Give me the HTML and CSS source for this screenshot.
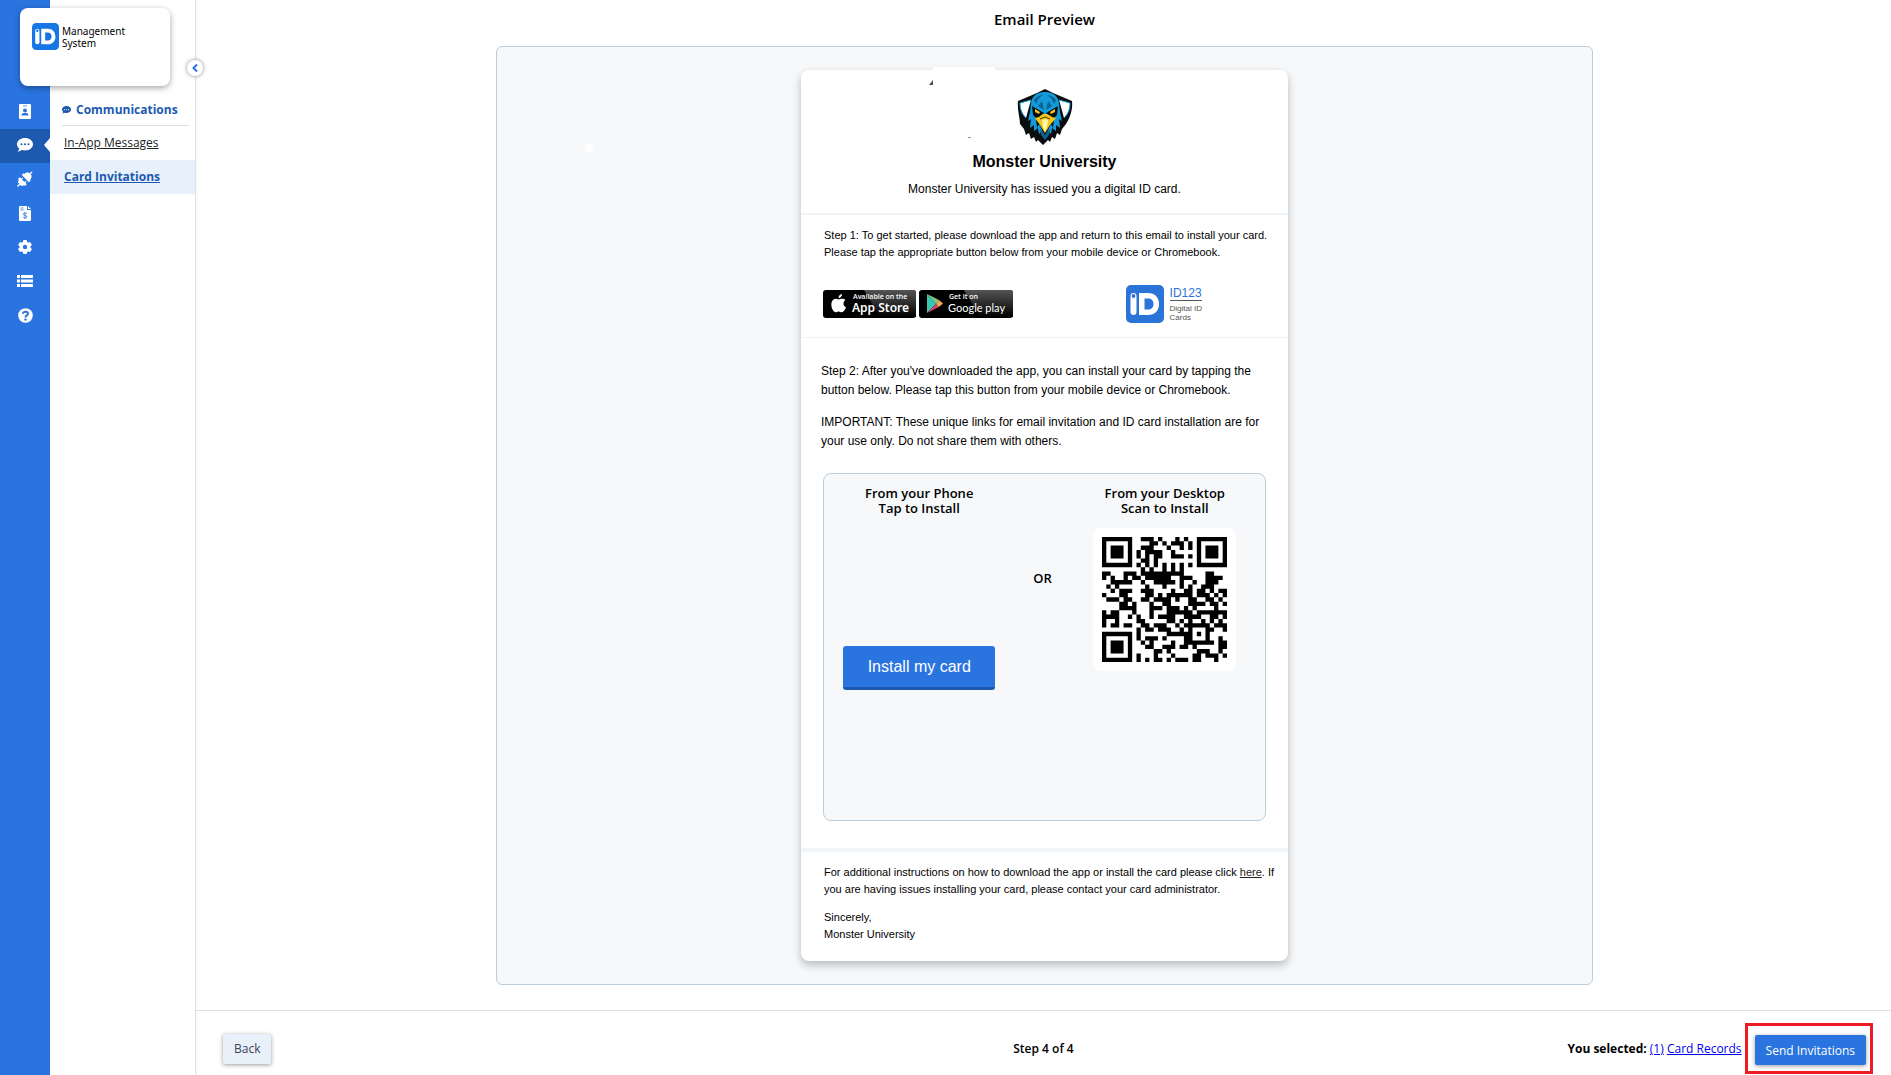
FILE: index.html
```html
<!DOCTYPE html>
<html lang="en">
<head>
    <meta charset="UTF-8">
    <meta name="viewport" content="width=device-width, initial-scale=1.0">
    <title>ID Management System - Card Invitations</title>
    <link rel="stylesheet" href="styles.css">
</head>
<body>
    <div class="app">
        <nav class="rail" aria-label="Main">
            <a href="#" aria-label="Card records">
                <svg width="12" height="15" viewBox="0 0 12 15"><path fill="#fff" fill-rule="evenodd" d="M1 0h10a1 1 0 0 1 1 1v13a1 1 0 0 1-1 1H1a1 1 0 0 1-1-1V1a1 1 0 0 1 1-1zM4 1.400h4v.8H4zM6 4.500a2 2 0 1 0 0 4 2 2 0 0 0 0-4zM2.500 11.500h7c0-1.700-1-2.500-2.300-2.500H4.800c-1.300 0-2.300.8-2.300 2.500z"/></svg>
            </a>
            <a href="#" class="active" aria-label="Communications">
                <svg width="16" height="14" viewBox="0 0 16 14"><path fill="#fff" d="M8 0c4.400 0 8 2.700 8 6.200s-3.600 6.200-8 6.200c-1.100 0-2.200-.2-3.200-.5C3.700 12.700 2.200 13.500.6 13.500c1-.9 1.500-2 1.600-3C.8 9.400 0 7.900 0 6.200 0 2.700 3.600 0 8 0z"/><g fill="#1c5ab0"><circle cx="4.500" cy="6.300" r="1"/><circle cx="8" cy="6.300" r="1"/><circle cx="11.500" cy="6.300" r="1"/></g></svg>
            </a>
            <a href="#" aria-label="Integrations">
                <svg width="18" height="18" viewBox="0 0 18 18"><g transform="rotate(-45 9 9)" fill="#fff"><path d="M-1.500 8.300h3v1.400h-3zM1.500 6.500l1.500-1h1V4h2.500v10H4v-1.500H3l-1.500-1zM6.500 6h1.700v1.200H6.500zM6.500 10.800h1.700V12H6.500zM9.500 4H12v1h1.500l2.500 1.500v1.800h3v1.400h-3v1.800L13.500 13H12v1H9.500z"/></g></svg>
            </a>
            <a href="#" aria-label="Billing">
                <svg width="12" height="15" viewBox="0 0 12 15"><path fill="#fff" d="M1 0h7v4h4v10a1 1 0 0 1-1 1H1a1 1 0 0 1-1-1V1a1 1 0 0 1 1-1zM9 0l3 3H9z"/><path fill="none" stroke="#2a74e0" stroke-width=".8" d="M1.500 2h3M1.500 4h3M7.800 7.500c-.8-.8-3.500-.9-3.500.7 0 1.800 3.600.9 3.600 2.600 0 1.500-2.800 1.500-3.700.6M6 6v7"/></svg>
            </a>
            <a href="#" aria-label="Settings">
                <svg width="16" height="16" viewBox="0 0 16 16"><g fill="#fff"><circle cx="8" cy="8" r="5.500"/><rect x="6" y="1" width="4" height="14" rx="1"/><rect x="6" y="1" width="4" height="14" rx="1" transform="rotate(60 8 8)"/><rect x="6" y="1" width="4" height="14" rx="1" transform="rotate(120 8 8)"/></g><circle cx="8" cy="8" r="2.200" fill="#2a74e0"/></svg>
            </a>
            <a href="#" aria-label="Lists">
                <svg width="16" height="12" viewBox="0 0 16 12"><path fill="#fff" d="M0 0h3v3H0zM4 0h12v3H4zM0 4.500h3v3H0zM4 4.500h12v3H4zM0 9h3v3H0zM4 9h12v3H4z"/></svg>
            </a>
            <a href="#" aria-label="Help">
                <svg width="15" height="15" viewBox="0 0 15 15"><circle cx="7.500" cy="7.500" r="7.300" fill="#fff"/><path fill="none" stroke="#2a74e0" stroke-width="2" d="M5 5.800c0-2.700 5-2.600 5 0C10 7.500 7.500 7.400 7.500 9.400"/><circle cx="7.500" cy="11.600" r="1.200" fill="#2a74e0"/></svg>
            </a>
        </nav>

        <aside class="submenu">
            <h2 class="submenu-title">
                <svg width="9" height="8" viewBox="0 0 16 14"><path fill="#1c5ab0" d="M8 0c4.400 0 8 2.700 8 6.200s-3.600 6.200-8 6.200c-1.100 0-2.200-.2-3.200-.5C3.700 12.700 2.200 13.500.6 13.500c1-.9 1.500-2 1.600-3C.8 9.400 0 7.900 0 6.200 0 2.700 3.600 0 8 0z"/><path stroke="#fff" stroke-width="1.500" stroke-dasharray="2 1.500" d="M3.500 6.500h9"/></svg>
                Communications
            </h2>
            <a href="#" class="submenu-link">In-App Messages</a>
            <a href="#" class="submenu-link current">Card Invitations</a>
            <button class="collapse" type="button" aria-label="Collapse menu">
                <svg width="6" height="8" viewBox="0 0 6 8"><path fill="none" stroke="#2a74e0" stroke-width="2" d="M5 .5L1.500 4 5 7.500"/></svg>
            </button>
        </aside>

        <div class="brand">
            <svg width="27" height="27" viewBox="0 0 38 38"><rect width="38" height="38" rx="6" fill="#1676e3"/><rect x="4.500" y="8" width="6" height="22" rx="3" fill="#fff"/><circle cx="7.500" cy="11" r="1.700" fill="#1676e3"/><path fill="#fff" fill-rule="evenodd" d="M13 8h9c7 0 11 4.500 11 11s-4 11-11 11h-9zM18.500 13.500v11H22c3.500 0 5.500-2 5.500-5.500s-2-5.500-5.500-5.500z"/></svg>
            <span class="brand-name">Management<br>System</span>
        </div>

        <div class="page">
            <main class="main">
                <h1 class="page-title">Email Preview</h1>
                <section class="preview">
                    <article class="email">
                        <header class="email-head">
                            <svg class="specks" width="70" height="80" viewBox="0 0 70 80"><path fill="#fff" d="M4 0h62v20H4z"/><path fill="#4b4d52" d="M4 13v5H0z"/><path fill="#999" d="M39 70h3v1h-3z"/></svg>
                            <svg class="crest" width="56" height="56" viewBox="0 0 56 56">
                                <path fill="#0a0d10" d="M28 0l8 4 19 8c1 8-2 17-6 23l-4 5-2 6-3-2-2 6-3-2-2 5-2-2-5 5-5-5-2 2-2-5-3 2-2-6-3 2-2-6-4-5C3 29 0 20 1 12l19-8z"/>
                                <path fill="#fff" d="M3 14l11-3-2 7-3 11C5 25 3 20 3 14zM53 14l-11-3 2 7 3 11c4-4 6-9 6-15z"/>
                                <path fill="none" stroke="#119bd8" d="M14 11L3 14c0 7 2 11 6 15M42 11l11 3c0 7-2 11-6 15"/>
                                <path fill="#119bdb" d="M28 3c-9 0-14 5-14 12l-1 8-2 9 3-2-1 9 4-3v6l4-3 1 6 3-3 3 8 3-8 3 3 1-6 4 3v-6l4 3-1-9 3 2-2-9-1-8C42 8 37 3 28 3z"/>
                                <path fill="#0e608d" d="M17 11c3-4 7-5 9-5-5 3-6 6-7 9zM39 11c-3-4-7-5-9-5 5 3 6 6 7 9zM25 12l2 9-6-4zM31 12l-2 9 6-4zM23 40l5 4 5-4-1 6-4 5-4-5z"/>
                                <path fill="#0a0d10" d="M15 17l12 7-4 4 1 9 4 6 4-6 1-9-4-4 12-7-1 9-3 3-1 10-2-4-3 6-3 5-3-5-3-6-2 4-1-10-3-3z"/>
                                <path fill="#f6c619" d="M18 20l5 3-1 2-4-2zM38 20l-5 3 1 2 4-2zM28 25c4 0 5 2 7 3l4 1-6 7-5 8-5-8-5-7 4-1c2-1 2-3 6-3z"/>
                                <path fill="#fff7a8" d="M28 30l3 1-1 7-2 5-2-5-1-7z"/>
                                <path fill="none" stroke="#473914" d="M23 30l5-2 5 2"/>
                            </svg>
                            <h2 class="org-name">Monster University</h2>
                            <p class="org-note">Monster University has issued you a digital ID card.</p>
                        </header>

                        <section class="step-one">
                            <p>Step 1: To get started, please download the app and return to this email to install your card. Please tap the appropriate button below from your mobile device or Chromebook.</p>
                            <div class="stores">
                                <a href="#" class="store" aria-label="Available on the App Store">
                                    <svg width="93" height="28" viewBox="0 0 93 28">
                                        <defs><linearGradient id="gloss" x1="0" y1="0" x2="0" y2="1"><stop offset="0" stop-color="#555"/><stop offset="1" stop-color="#000"/></linearGradient></defs>
                                        <rect width="93" height="28" rx="3" fill="#000"/><path fill="url(#gloss)" d="M41 0h49a3 3 0 0 1 3 3v24H57z"/>
                                        <path fill="#fff" d="M19 4c.2 2-1.500 4-3.400 4C15.400 6 17 4.300 19 4zM22.500 10c-3 2-2.500 6 .5 7.200-.8 2.300-2.400 5-4.100 5-1.300 0-1.700-.8-3.200-.8s-2 .8-3.200.8C9.500 22.200 6 13 10.500 9.500c2-1.400 3.800-.1 5.100-.1 1.300 0 4.500-2 6.900.6z"/>
                                        <text x="30" y="9" class="badge-small">Available on the</text><text x="29" y="22" class="badge-large">App Store</text>
                                    </svg>
                                </a>
                                <a href="#" class="store" aria-label="Get it on Google play">
                                    <svg width="94" height="28" viewBox="0 0 94 28">
                                        <rect width="94" height="28" rx="3" fill="#000"/><path fill="url(#gloss)" d="M45 0h46a3 3 0 0 1 3 3v24H61z"/>
                                        <path fill="#35c7b2" d="M8 4v19l9-9z"/><path fill="#7bc883" d="M8 4l12 6-3 4z"/><path fill="#d63f62" d="M8 23l12-6-3-3z"/><path fill="#f5a957" d="M20 10l4 3.500-4 3.500-3-3z"/>
                                        <text x="30" y="9" class="badge-small">Get it on</text><text x="29" y="22" class="badge-google">Google play</text>
                                    </svg>
                                </a>
                                <div class="id-logo">
                                    <svg width="38" height="38" viewBox="0 0 38 38"><rect width="38" height="38" rx="5" fill="#2a74d8"/><rect x="4.500" y="8" width="6" height="22" rx="3" fill="#fff"/><circle cx="7.500" cy="11" r="1.900" fill="#2a74d8"/><path fill="#fff" fill-rule="evenodd" d="M13 8h9c7 0 11 4.500 11 11s-4 11-11 11h-9zM18.500 13.500v11H22c3.500 0 5.500-2 5.500-5.500s-2-5.500-5.500-5.500z"/></svg>
                                    <div class="id-text"><strong>ID123</strong><span>Digital ID<br>Cards</span></div>
                                </div>
                            </div>
                        </section>

                        <section class="step-two">
                            <p>Step 2: After you've downloaded the app, you can install your card by tapping the button below. Please tap this button from your mobile device or Chromebook.</p>
                            <p>IMPORTANT: These unique links for email invitation and ID card installation are for your use only. Do not share them with others.</p>
                            <div class="install-box">
                                <div class="install-phone">
                                    <h3>From your Phone<br>Tap to Install</h3>
                                    <button class="install-btn" type="button">Install my card</button>
                                </div>
                                <div class="install-or">OR</div>
                                <div class="install-desktop">
                                    <h3>From your Desktop<br>Scan to Install</h3>
                                    <div class="qr-tile"><svg id="qr" width="125" height="125" viewBox="0 0 29 29" role="img" aria-label="QR code"><path/></svg></div>
                                </div>
                            </div>
                        </section>

                        <footer class="email-foot">
                            <p>For additional instructions on how to download the app or install the card please click <a href="#">here</a>. If you are having issues installing your card, please contact your card administrator.</p>
                            <p>Sincerely,<br>Monster University</p>
                        </footer>
                    </article>
                </section>
            </main>

            <footer class="actions">
                <button class="btn btn-back" type="button">Back</button>
                <span class="step-count">Step 4 of 4</span>
                <div class="send">
                    <span class="selected"><b>You selected:</b> <a href="#">(1)</a> <a href="#">Card Records</a></span>
                    <div class="highlight"><button class="btn btn-send" type="button">Send Invitations</button></div>
                </div>
            </footer>
        </div>
    </div>
    <script src="qr.js"></script>
</body>
</html>
```

FILE: styles.css
```css
* {
    box-sizing: border-box;
}

body {
    margin: 0;
    font-family: 'Open Sans', 'Noto Sans', sans-serif;
    font-size: 12px;
    color: #000;
    background: #fff;
}

h1, h2, h3, p {
    margin: 0;
}

svg {
    display: block;
    flex-shrink: 0;
}

button {
    font-family: inherit;
    cursor: pointer;
}

.app {
    display: flex;
    min-height: 100vh;
    position: relative;
}

/* Icon rail */
.rail {
    width: 50px;
    padding-top: 95px;
    background: #2a74e0;
    flex-shrink: 0;
}

.rail a {
    display: flex;
    align-items: center;
    justify-content: center;
    height: 34px;
    padding-bottom: 2px;
    position: relative;
}

.rail a.active {
    background: #1c5ab0;
}

.rail a.active::after {
    content: "";
    position: absolute;
    right: 0;
    top: 9px;
    border: 7px solid transparent;
    border-left-width: 0;
    border-right: 6px solid #fff;
}

/* Logo card laid over the rail and submenu */
.brand {
    position: absolute;
    left: 20px;
    top: 8px;
    width: 150px;
    height: 78px;
    padding: 15px 12px;
    display: flex;
    gap: 3px;
    background: #fff;
    border-radius: 8px;
    box-shadow: 0 2px 6px rgba(0, 0, 0, 0.35);
}

.brand-name {
    font-family: 'Noto Sans', sans-serif;
    font-size: 10px;
    line-height: 12px;
    padding-top: 2px;
}

/* Submenu */
.submenu {
    width: 146px;
    padding-top: 94px;
    border-right: 1px solid #e0e2e5;
    box-shadow: 1px 0 3px rgba(0, 0, 0, 0.04);
    position: relative;
    flex-shrink: 0;
}

.submenu-title {
    display: flex;
    align-items: center;
    gap: 5px;
    height: 32px;
    margin: 0 6px 0 12px;
    font-size: 12px;
    color: #1c5ab0;
    border-bottom: 1px solid #dcdfe2;
}

.submenu-link {
    display: block;
    padding-left: 14px;
    line-height: 34px;
    color: #222;
}

.submenu-link.current {
    font-weight: 700;
    color: #1c5ab0;
    background: #e8f0fb;
}

.collapse {
    position: absolute;
    right: -8px;
    top: 60px;
    width: 16px;
    height: 16px;
    padding: 0;
    display: flex;
    align-items: center;
    justify-content: center;
    border: 0;
    border-radius: 50%;
    background: #fff;
    box-shadow: 0 0 4px rgba(0, 0, 0, 0.45);
}

/* Page */
.page {
    flex: 1;
    display: flex;
    flex-direction: column;
    min-width: 0;
}

.main {
    flex: 1;
    display: flex;
    flex-direction: column;
    align-items: center;
    padding: 7px 23px 25px 25px;
}

.page-title {
    font-size: 15px;
    font-weight: 600;
    line-height: 24px;
    margin-bottom: 15px;
}

.preview {
    width: 100%;
    max-width: 1097px;
    padding: 23px 0;
    display: flex;
    justify-content: center;
    background: radial-gradient(circle at 92px 101px, #fff 4px, transparent 5px) #f6f8fa;
    border: 1px solid #bccddb;
    border-radius: 6px;
}

/* Email */
.email {
    width: 487px;
    font-family: 'Liberation Sans', Arial, sans-serif;
    font-size: 11px;
    line-height: 17px;
    background: #fff;
    border-radius: 8px;
    box-shadow: 0 4px 8px rgba(0, 0, 0, 0.25);
}

.email-head {
    position: relative;
    padding: 19px 20px 15px;
    text-align: center;
    border-bottom: 2px solid #eff4f8;
}

.specks {
    position: absolute;
    left: 128px;
    top: -3px;
}

.crest {
    position: relative;
    margin: 0 auto 7px;
}

.org-name {
    font-size: 16px;
    line-height: 20px;
    margin-bottom: 8px;
}

.org-note {
    font-size: 12px;
    line-height: 18px;
}

.step-one {
    padding: 12px 10px 14px 23px;
    border-bottom: 1px solid #f0f2f4;
}

.stores {
    display: flex;
    align-items: center;
    gap: 3px;
    margin: 24px 0 0 -1px;
}

.badge-small {
    font: 600 7px 'Open Sans', sans-serif;
    fill: #fff;
}

.badge-large {
    font: 600 12px 'Noto Sans', sans-serif;
    fill: #fff;
}

.badge-google {
    font: 11px 'Lato', sans-serif;
    fill: #fff;
}

.id-logo {
    display: flex;
    gap: 6px;
    margin: 0 76px 0 auto;
}

.id-text {
    padding-top: 1px;
    font-size: 8px;
    line-height: 9px;
    color: #555;
}

.id-text strong {
    display: block;
    font-size: 12px;
    font-weight: 400;
    line-height: 14px;
    color: #2a74d8;
    border-bottom: 1px solid #555;
    margin-bottom: 3px;
}

.id-text span {
    display: block;
}

.step-two {
    padding: 24px 20px 27px;
    border-bottom: 4px solid #f1f5f8;
}

.step-two p {
    font-size: 12px;
    line-height: 19px;
    margin-bottom: 13px;
}

.install-box {
    display: grid;
    grid-template-columns: 190fr 56fr 188fr;
    min-height: 348px;
    margin: 22px 2px 0;
    padding: 12px 6px 12px 0;
    font-family: 'Open Sans', 'Noto Sans', sans-serif;
    text-align: center;
    background: #f6f8fa;
    border: 1px solid #bccddb;
    border-radius: 8px;
}

.install-box h3,
.install-or {
    font-size: 13px;
    font-weight: 600;
    line-height: 15px;
}

.install-phone,
.install-desktop {
    display: flex;
    flex-direction: column;
    align-items: center;
}

.install-phone {
    gap: 130px;
}

.install-desktop {
    gap: 12px;
}

.install-or {
    padding-top: 85px;
}

.install-btn {
    width: 152px;
    height: 44px;
    padding: 0;
    font-family: 'Liberation Sans', Arial, sans-serif;
    font-size: 16px;
    color: #fff;
    background: #2a74e0;
    border: 0;
    border-bottom: 3px solid #1c5ab0;
    border-radius: 3px;
}

.qr-tile {
    padding: 9px;
    background: #fff;
    border-radius: 8px;
}

.email-foot {
    padding: 12px 10px 18px 23px;
}

.email-foot p + p {
    margin-top: 11px;
}

.email-foot a {
    color: #222;
}

/* Bottom bar */
.actions {
    display: grid;
    grid-template-columns: 1fr auto 1fr;
    align-items: center;
    padding: 12px 18px 2px;
    border-top: 1px solid #dcdfe5;
}

.btn {
    height: 30px;
    padding: 0 11px;
    font-size: 12px;
    border: 0;
    border-radius: 2px;
    box-shadow: 0 1px 4px rgba(0, 0, 0, 0.4);
}

.btn-back {
    justify-self: start;
    margin-left: 9px;
    color: #3b4358;
    background: #e8f0fa;
}

.btn-send {
    display: block;
    color: #fff;
    background: #2a74e0;
}

.step-count {
    font-weight: 600;
}

.send {
    display: flex;
    align-items: center;
    justify-content: flex-end;
    gap: 3px;
}

.selected a {
    color: #00e;
}

.highlight {
    padding: 9px 4px 6px 7px;
    border: 3px solid #ed1c24;
}
```

FILE: qr.js
```js
// QR code, version 3, level L, mask 5
const SIZE = 29;
const DATA_WORDS = 55;
const EC_WORDS = 15;
const FORMAT = '110001100011000';

function gfMul(a, b) {
    let r = 0;
    for (let i = 7; i >= 0; i--) {
        r = (r << 1) ^ ((r >> 7) * 0x11d);
        if ((b >> i) & 1) r ^= a;
    }
    return r;
}

function codewords(text) {
    let bits = '0100' + text.length.toString(2).padStart(8, '0');
    for (const ch of text) bits += ch.charCodeAt(0).toString(2).padStart(8, '0');
    bits += '0000';
    const words = bits.match(/.{8}/g).map(b => parseInt(b, 2));
    for (let pad = 0xec; words.length < DATA_WORDS; pad ^= 0xec ^ 0x11) words.push(pad);

    // Reed-Solomon divisor and remainder
    const div = new Array(EC_WORDS).fill(0);
    div[EC_WORDS - 1] = 1;
    let root = 1;
    for (let i = 0; i < EC_WORDS; i++) {
        for (let j = 0; j < EC_WORDS; j++) {
            div[j] = gfMul(div[j], root);
            if (j + 1 < EC_WORDS) div[j] ^= div[j + 1];
        }
        root = gfMul(root, 2);
    }
    const rem = new Array(EC_WORDS).fill(0);
    for (const w of words) {
        const f = w ^ rem.shift();
        rem.push(0);
        div.forEach((d, i) => { rem[i] ^= gfMul(d, f); });
    }
    return words.concat(rem);
}

function drawQr(text) {
    const grid = Array.from({ length: SIZE }, () => new Array(SIZE).fill(null));
    const set = (r, c, v) => {
        if (r >= 0 && c >= 0 && r < SIZE && c < SIZE) grid[r][c] = Number(v);
    };

    for (let i = 0; i < SIZE; i++) {
        set(6, i, i % 2 === 0);
        set(i, 6, i % 2 === 0);
    }
    for (const [r, c] of [[3, 3], [3, SIZE - 4], [SIZE - 4, 3]]) {
        for (let y = -4; y <= 4; y++) {
            for (let x = -4; x <= 4; x++) {
                const d = Math.max(Math.abs(x), Math.abs(y));
                set(r + y, c + x, d !== 2 && d !== 4);
            }
        }
    }
    for (let y = -2; y <= 2; y++) {
        for (let x = -2; x <= 2; x++) {
            set(22 + y, 22 + x, Math.max(Math.abs(x), Math.abs(y)) !== 1);
        }
    }

    // Format bits, both copies
    const f = i => FORMAT[14 - i] === '1';
    for (let i = 0; i <= 5; i++) set(i, 8, f(i));
    set(7, 8, f(6));
    set(8, 8, f(7));
    set(8, 7, f(8));
    for (let i = 9; i < 15; i++) set(8, 14 - i, f(i));
    for (let i = 0; i < 8; i++) set(8, SIZE - 1 - i, f(i));
    for (let i = 8; i < 15; i++) set(SIZE - 15 + i, 8, f(i));
    set(SIZE - 8, 8, 1);

    const bits = codewords(text).map(w => w.toString(2).padStart(8, '0')).join('');
    let n = 0;
    for (let right = SIZE - 1; right >= 1; right -= 2) {
        if (right === 6) right = 5;
        for (let v = 0; v < SIZE; v++) {
            const up = ((right + 1) & 2) === 0;
            const r = up ? SIZE - 1 - v : v;
            for (const c of [right, right - 1]) {
                if (grid[r][c] !== null) continue;
                const bit = bits[n++] === '1' ? 1 : 0;
                const mask = (r * c) % 2 + (r * c) % 3 === 0 ? 1 : 0;
                grid[r][c] = bit ^ mask;
            }
        }
    }

    let d = '';
    grid.forEach((row, r) => row.forEach((v, c) => {
        if (v) d += `M${c} ${r}h1v1h-1z`;
    }));
    document.querySelector('#qr path').setAttribute('d', d);
}

drawQr('It will hold a valid URL once invitation is sent.');
```
